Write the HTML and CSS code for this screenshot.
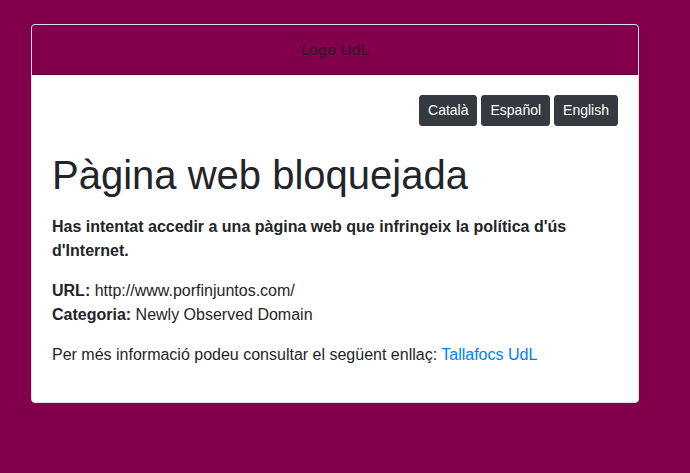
FILE: index.html
```html
<!DOCTYPE html>
<html lang="ca">
<head>
<meta charset="utf-8">
<title>Pàgina web bloquejada</title>
<link rel="stylesheet" href="styles.css">
</head>
<body>
<div class="card">
  <div class="card-header"><span class="logo">Logo UdL</span></div>
  <div class="card-body">
    <div class="langs">
      <a class="btn" href="#">Català</a>
      <a class="btn" href="#">Español</a>
      <a class="btn" href="#">English</a>
    </div>
    <h1 class="title">Pàgina web bloquejada</h1>
    <p class="lead"><strong>Has intentat accedir a una pàgina web que infringeix la política d'ús d'Internet.</strong></p>
    <p class="info"><strong>URL:</strong> http://www.porfinjuntos.com/<br><strong>Categoria:</strong> Newly Observed Domain</p>
    <p class="more">Per més informació podeu consultar el següent enllaç: <a class="link" href="#">Tallafocs UdL</a></p>
  </div>
</div>
</body>
</html>
```

FILE: styles.css
```css
html, body {
  margin: 0;
  padding: 0;
}
body {
  background: #82004b;
  font-family: "Liberation Sans", Arial, sans-serif;
  font-size: 16px;
  line-height: 1.5;
  color: #212529;
  padding: 24px 0 0 31px;
  height: 473px;
  box-sizing: border-box;
}
.card {
  width: 608px;
  box-sizing: border-box;
  border: 1px solid #dcdcdc;
  border-radius: 4px;
  background: #fff;
  overflow: hidden;
}
.card-header {
  height: 50px;
  padding-top: 2px;
  background: #82004b;
  border-bottom: 1px solid #5e0037;
  box-sizing: border-box;
  display: flex;
  align-items: center;
  justify-content: center;
}
.logo {
  font-family: "DejaVu Sans", sans-serif;
  font-size: 14.5px;
  color: #2a1a24;
}
.card-body {
  padding: 20px 20px 20px 20px;
}
.langs {
  display: flex;
  justify-content: flex-end;
  gap: 4px;
}
.btn {
  display: inline-block;
  background: #343a40;
  color: #fff;
  text-decoration: none;
  font-size: 14px;
  line-height: 21px;
  padding: 4px 8px;
  border: 1px solid #343a40;
  border-radius: 3px;
}
.title {
  font-size: 40px;
  font-weight: 400;
  line-height: 1.2;
  margin: 25px 0 16px 0;
}
.lead {
  margin: 0 0 16px 0;
}
.info {
  margin: 0 0 16px 0;
}
.more {
  margin: 0 0 15px 0;
}
.link {
  color: #007bff;
  text-decoration: none;
}
```
